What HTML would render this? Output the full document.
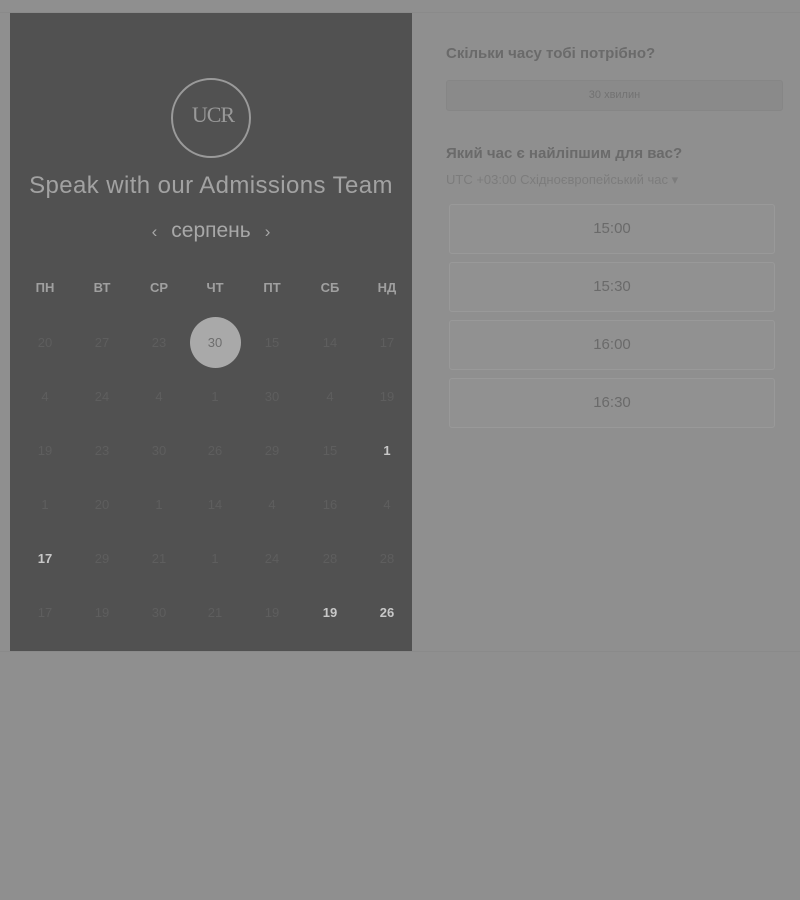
<!DOCTYPE html>
<html><head><meta charset="utf-8"><style>
body{margin:0;width:800px;height:900px;background:#8f8f8f;font-family:"Liberation Sans",sans-serif;position:relative;overflow:hidden}
.top{position:absolute;left:0;top:0;width:800px;height:12px;background:#8f8f8f;border-bottom:1px solid #8a8a8a}
.bottomline{position:absolute;left:0;top:651px;width:800px;height:1px;background:#8a8a8a}
.panel{position:absolute;left:10px;top:13px;width:402px;height:638px;background:#515151}
.logo{position:absolute;left:171px;top:78px;width:76px;height:76px;border:2px solid #9a9a9a;border-radius:50%}
.logo span{position:absolute;left:4px;right:0;top:22px;text-align:center;font-family:"Liberation Serif",serif;font-size:22px;color:#999;letter-spacing:-1px}
.t{position:absolute;color:#9c9c9c}
.d{position:absolute;width:40px;margin-left:-20px;text-align:center;font-size:13px;color:#5e5e5e}
.w{color:#c8c8c8;font-weight:bold}
.h{position:absolute;width:40px;margin-left:-20px;text-align:center;font-size:13px;font-weight:bold;color:#a0a0a0}
.slot{position:absolute;left:449px;width:326px;height:50px;border:1px solid #999;border-radius:3px;box-sizing:border-box;text-align:center;line-height:48px;font-size:15px;color:#6a6a6a;background:#919191}
</style></head><body>
<div class="top"></div>
<div class="bottomline"></div>
<div class="panel"></div>
<div class="logo"><span>UCR</span></div>
<div class="t" style="left:10px;width:402px;top:172px;text-align:center;font-size:24px;letter-spacing:0.4px;color:#a2a2a2">Speak with our Admissions Team</div>
<div class="t" style="left:10px;width:402px;top:219px;text-align:center;font-size:21px;color:#a8a8a8"><span style="font-size:17px;margin-right:14px">‹</span>серпень<span style="font-size:17px;margin-left:14px">›</span></div>
<div style="position:absolute;left:190px;top:317px;width:51px;height:51px;border-radius:50%;background:#a9a9a9"></div>
<div id="cal"></div>
<div class="t" style="left:446px;top:45px;font-size:15px;font-weight:bold;color:#6a6a6a">Скільки часу тобі потрібно?</div>
<div style="position:absolute;left:446px;top:80px;width:337px;height:31px;background:#8a8a8a;border:1px solid #868686;border-radius:3px;box-sizing:border-box;text-align:center;line-height:29px;font-size:11px;color:#727272">30 хвилин</div>
<div class="t" style="left:446px;top:145px;font-size:15px;font-weight:bold;color:#6a6a6a">Який час є найліпшим для вас?</div>
<div class="t" style="left:446px;top:172px;font-size:13px;color:#7c7c7c">UTC +03:00 Східноєвропейський час ▾</div>
<div class="slot" style="top:204px">15:00</div>
<div class="slot" style="top:262px">15:30</div>
<div class="slot" style="top:320px">16:00</div>
<div class="slot" style="top:378px">16:30</div>
<script>
var xs=[45,102,159,215,272,330,387],hd=["ПН","ВТ","СР","ЧТ","ПТ","СБ","НД"];
var rows=[["20","27","23","30","15","14","17"],["4","24","4","1","30","4","19"],["19","23","30","26","29","15","1"],["1","20","1","14","4","16","4"],["17","29","21","1","24","28","28"],["17","19","30","21","19","19","26"]];
var wh={"2,6":1,"4,0":1,"5,5":1,"5,6":1};
var h="";
for(var i=0;i<7;i++)h+='<div class="h" style="left:'+xs[i]+'px;top:280px">'+hd[i]+'</div>';
for(var r=0;r<6;r++)for(var i=0;i<7;i++){var c=wh[r+","+i]?" w":"";var st=(r==0&&i==3)?"color:#6e6e6e;":"";h+='<div class="d'+c+'" style="'+st+'left:'+xs[i]+'px;top:'+(335+r*54)+'px">'+rows[r][i]+'</div>';}
document.getElementById("cal").innerHTML=h;
</script>
</body></html>
